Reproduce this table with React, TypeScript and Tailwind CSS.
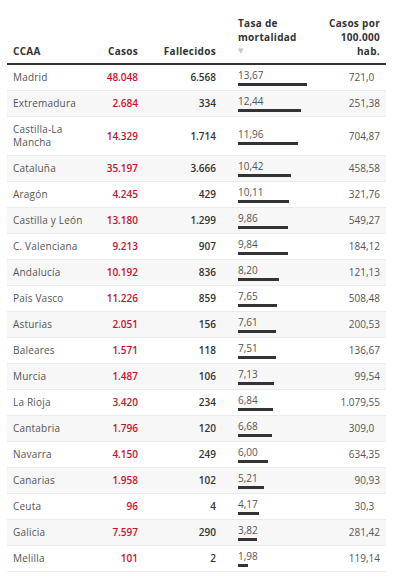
import React from "react";

type Row = { name: string; casos: string; fall: string; tasa: number; por: string };

const rows: Row[] = [
  { name: "Madrid", casos: "48.048", fall: "6.568", tasa: 13.67, por: "721,0" },
  { name: "Extremadura", casos: "2.684", fall: "334", tasa: 12.44, por: "251,38" },
  { name: "Castilla-La Mancha", casos: "14.329", fall: "1.714", tasa: 11.96, por: "704,87" },
  { name: "Cataluña", casos: "35.197", fall: "3.666", tasa: 10.42, por: "458,58" },
  { name: "Aragón", casos: "4.245", fall: "429", tasa: 10.11, por: "321,76" },
  { name: "Castilla y León", casos: "13.180", fall: "1.299", tasa: 9.86, por: "549,27" },
  { name: "C. Valenciana", casos: "9.213", fall: "907", tasa: 9.84, por: "184,12" },
  { name: "Andalucía", casos: "10.192", fall: "836", tasa: 8.2, por: "121,13" },
  { name: "País Vasco", casos: "11.226", fall: "859", tasa: 7.65, por: "508,48" },
  { name: "Asturias", casos: "2.051", fall: "156", tasa: 7.61, por: "200,53" },
  { name: "Baleares", casos: "1.571", fall: "118", tasa: 7.51, por: "136,67" },
  { name: "Murcia", casos: "1.487", fall: "106", tasa: 7.13, por: "99,54" },
  { name: "La Rioja", casos: "3.420", fall: "234", tasa: 6.84, por: "1.079,55" },
  { name: "Cantabria", casos: "1.796", fall: "120", tasa: 6.68, por: "309,0" },
  { name: "Navarra", casos: "4.150", fall: "249", tasa: 6.0, por: "634,35" },
  { name: "Canarias", casos: "1.958", fall: "102", tasa: 5.21, por: "90,93" },
  { name: "Ceuta", casos: "96", fall: "4", tasa: 4.17, por: "30,3" },
  { name: "Galicia", casos: "7.597", fall: "290", tasa: 3.82, por: "281,42" },
  { name: "Melilla", casos: "101", fall: "2", tasa: 1.98, por: "119,14" },
];

const grid = "grid grid-cols-[83px_54px_78px_88px_76px]";

export default function App() {
  return (
    <div
      className="w-[403px] h-[581px] bg-white pl-[7px] text-[10px]"
      style={{ fontFamily: '"Open Sans", "DejaVu Sans", sans-serif' }}
    >
      <div className="w-[379px]">
        <div className={`${grid} items-end pt-[16px] border-b-2 border-[#333333] text-[#333333] font-bold leading-[14px] tracking-[0.3px]`}>
          <div className="pl-[6px] pb-[5px]">CCAA</div>
          <div className="pr-[6px] pb-[5px] text-right">Casos</div>
          <div className="pr-[6px] pb-[5px] text-right">Fallecidos</div>
          <div className="pl-[16px] pb-[5px]">
            <div>Tasa de</div>
            <div>mortalidad</div>
            <div className="text-[7px] text-[#c8c8c8] font-normal">▼</div>
          </div>
          <div className="pr-[6px] pb-[5px] text-right">
            <div>Casos por</div>
            <div>100.000</div>
            <div>hab.</div>
          </div>
        </div>
        {rows.map((r, i) => (
          <div
            key={r.name}
            className={`${grid} items-center min-h-[26px] border-b border-[#ebebeb] leading-[13px] ${
              i % 2 === 1 ? "bg-[#f7f7f7]" : "bg-white"
            }`}
          >
            <div className="pl-[6px] pr-[2px] py-[6px] text-[#555555] tracking-[0.2px]">{r.name}</div>
            <div className="pr-[6px] text-right font-semibold text-[#c8102e]">{r.casos}</div>
            <div className="pr-[6px] text-right font-semibold text-[#333333]">{r.fall}</div>
            <div className="pl-[16px] flex flex-col items-start">
              <div className="leading-[12px] text-[#555555]">{r.tasa.toFixed(2).replace(".", ",")}</div>
              <div className="mt-[2px] h-[3px] bg-[#333333]" style={{ width: `${(r.tasa / 13.67) * 69}px` }} />
            </div>
            <div className="pr-[6px] text-right text-[#555555]">
              {r.por}
              {r.por.split(",")[1].length === 1 ? <span className="invisible">0</span> : null}
            </div>
          </div>
        ))}
      </div>
    </div>
  );
}
